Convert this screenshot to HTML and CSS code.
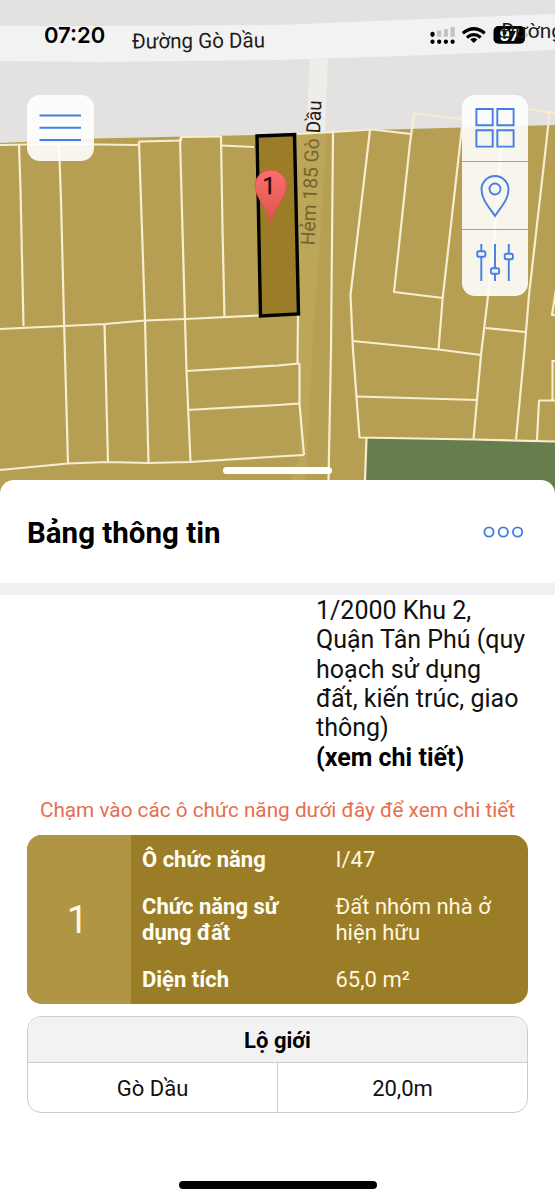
FILE: index.html
```html
<!DOCTYPE html>
<html lang="vi">
<head>
<meta charset="utf-8">
<title>Bảng thông tin</title>
<link rel="stylesheet" href="styles.css">
</head>
<body>
<main class="screen">
  <section class="map">
    <svg class="map-canvas" viewBox="0 0 555 500">
      <defs>
        <linearGradient id="pin" x1="0" y1="0" x2="0" y2="1"><stop offset="0" stop-color="#fb706f"/><stop offset="1" stop-color="#dd5048"/></linearGradient>
      </defs>
      <rect width="555" height="500" fill="#e3e2e1"/>
      <path class="road" d="M0 26 100 26 277 25 400 20 555 14V50L400 56 277 60 100 62 0 61z"/>
      <path class="alley" d="M310 59H328L325 135H306z"/>
      <path class="zone" d="M0 143 95 138.5 257 135 333 132 372 130 462 127.5 555 125V500H0z"/>
      <path class="alley-zone" d="M297 134 327 132 318 270 314 320 306 480H290L300 455 299 314z"/>
      <path class="park" d="M366 438 474 440 555 441V500H365z"/>
      <g class="parcels">
        <path d="M0 145 58 144 138.500 145 139.500 141.500 181 140.500V137L220.500 136.500M221 145.500 254 147"/>
        <path d="M19 144 20.500 190 23.500 326M59 144 61 200 64 320 68 463.500M139 142 142 230 145 320 148.500 463M180 138 182.500 230 185 320 186.500 371 190.500 462M221 136 222.500 230 224.500 317"/>
        <path d="M0 329 64 326 105 324 145 320.500 185 319 259 315.500M104.500 324 108 462M0 470 68 463.500 108 462 148 463 190 462 278 456.500 304 455"/>
        <path d="M186 371 278 365.500 299 363.500M187 410 278 405 299 403.500M298 315 297.500 363.500 299.500 364V403.500L304 455"/>
        <path d="M297 134 333 132 372 129.500 411 134M333 132 331 350 328.500 480"/>
        <path d="M370 130 350.500 295 353 350 359.500 437.500 474 439.500 555 441.500"/>
        <path d="M462 119 414 113.500 410 143 394 292 443 298M462 127 442.700 298 438.500 349.500"/>
        <path d="M462 119 466 99M528 109 555 113M504 108 495 230 488 296 481 355 473.500 439.500M549.500 113 545.500 150 529 295 524.500 350 516 439.500"/>
        <path d="M353 341 438.500 349.500 481 355M357 396.500 477 400M485.500 328 525.500 332M556 290 552 315H556M556 361H552.500V400M537 440 539 400.500H556M366.500 438 365 480"/>
      </g>
      <path class="selected" d="M257 136 294.500 134.500 298.500 314 260.500 316z"/>
      <path class="pin" d="M270.500 225C269 209 255 199 255 184.500A15.800 15.800 0 0 1 286.500 184.500C286.500 199 272 209 270.500 225z"/>
      <text class="pin-label" x="269" y="194" text-anchor="middle">1</text>
      <text class="map-label" x="132" y="48.500" textLength="133" lengthAdjust="spacingAndGlyphs" transform="rotate(-.5 132 48)">Đường Gò Dầu</text>
      <text class="map-label alley-label" transform="translate(314.500 245.500) rotate(-87.500)" textLength="107" lengthAdjust="spacingAndGlyphs">Hẻm 185 Gò</text>
      <text class="map-label end-label" transform="translate(320 133.500) rotate(-87.500)" textLength="33" lengthAdjust="spacingAndGlyphs">Dầu</text>
    </svg>

    <header class="status">
      <span class="clock">07:20</span>
      <svg class="status-icons" width="130" height="40" viewBox="0 0 130 40">
        <g stroke-width="4.300" stroke-linecap="round">
          <path stroke="#000" d="M7.500 14v.8M7.500 21.700v.1M14.200 21.700v.1M20.900 21.700v.1M27.600 21.700v.1"/>
          <path stroke="#c3c3c3" stroke-linecap="butt" d="M14.200 10.500v6.300M20.900 9v7.800M27.600 7v9.800"/>
        </g>
        <path d="M37.800 13.300Q48.800 4.200 59.800 13.300M41.900 17.400Q48.800 11.700 55.700 17.400" fill="none" stroke="#000" stroke-width="3.200"/>
        <path d="M48.800 23 45.200 19.400Q48.800 16.600 52.400 19.400z"/>
        <rect x="68.500" y="6" width="31.500" height="17.800" rx="5"/>
        <path d="M101.500 12.500q2.300 2.500 0 5z" fill="#aaa"/>
        <text class="battery" x="84.300" y="21" text-anchor="middle">97</text>
        <text class="map-label" x="76" y="18" textLength="62" lengthAdjust="spacingAndGlyphs">Đường</text>
      </svg>
    </header>

    <div class="controls">
      <button class="control menu" aria-label="Menu">
        <svg width="67" height="66" viewBox="0 0 67 66"><path d="M12.500 20.500h41.500M12.500 32.800h41.500M12.500 45h41.500"/></svg>
      </button>
      <div class="toolbar">
        <button class="control" aria-label="Grid"><svg width="66" height="66" viewBox="0 0 66 66"><path d="M14.400 14h16.300v16.300H14.400zM35.300 14h16.300v16.300H35.300zM14.400 35.300h16.300v16.300H14.400zM35.300 35.300h16.300v16.300H35.300z"/></svg></button>
        <button class="control" aria-label="Location"><svg width="66" height="67" viewBox="0 0 66 67"><path d="M33 54C28 46 19.500 38 19.500 27.500A13.500 13.500 0 0 1 46.500 27.500C46.500 38 38 46 33 54z"/><circle cx="33" cy="27" r="5.500"/></svg></button>
        <button class="control" aria-label="Filter"><svg width="66" height="66" viewBox="0 0 66 66"><path d="M19.300 14v7.500M19.300 27v24M33 14v24.500M33 44v7M46.800 14v10M46.800 29.500v21.500"/><rect x="15.200" y="21.200" width="8.200" height="5.500" rx="1.700"/><rect x="28.900" y="38.200" width="8.200" height="5.500" rx="1.700"/><rect x="42.700" y="23.700" width="8.200" height="5.500" rx="1.700"/></svg></button>
      </div>
    </div>
    <div class="handle"></div>
  </section>

  <section class="sheet">
    <header class="sheet-head">
      <h1>Bảng thông tin</h1>
      <svg width="42" height="16" viewBox="0 0 42 16" fill="none" stroke="#3f7fe8" stroke-width="1.900"><circle cx="7" cy="7" r="4.600"/><circle cx="21.300" cy="7" r="4.600"/><circle cx="35.600" cy="7" r="4.600"/></svg>
    </header>
    <div class="sheet-body">
      <p class="plan"><span>1/2000 Khu 2,<br>Quận Tân Phú (quy<br>hoạch sử dụng<br>đất, kiến trúc, giao<br>thông)</span><br><b>(xem chi tiết)</b></p>
      <p class="hint">Chạm vào các ô chức năng dưới đây để xem chi tiết</p>
      <div class="lot">
        <div class="lot-number">1</div>
        <dl class="lot-info">
          <dt>Ô chức năng</dt><dd>I/47</dd>
          <dt>Chức năng sử<br>dụng đất</dt><dd>Đất nhóm nhà ở<br>hiện hữu</dd>
          <dt>Diện tích</dt><dd>65,0 m²</dd>
        </dl>
      </div>
      <div class="road-table">
        <div class="road-title">Lộ giới</div>
        <div class="road-row"><div>Gò Dầu</div><div>20,0m</div></div>
      </div>
    </div>
    <div class="home-bar"></div>
  </section>
</main>
</body>
</html>
```
FILE: styles.css
```css
* { box-sizing: border-box; }
body { margin: 0; background: #fff; font-family: Roboto, "Liberation Sans", sans-serif; color: #111; }
.screen { width: 555px; height: 1200px; overflow: hidden; display: flex; flex-direction: column; }
.map { position: relative; height: 480px; flex: none; display: flex; flex-direction: column; }
.map-canvas { position: absolute; left: 0; top: 0; width: 555px; height: 500px; }
.road { fill: #f2f2f2; }
.alley { fill: #efedea; }
.zone { fill: #b69f53; }
.alley-zone { fill: #bba65a; }
.park { fill: #687d4d; }
.parcels path { fill: none; stroke: #f9edcf; stroke-width: 2.2; stroke-linejoin: round; }
.selected { fill: #9b7d28; stroke: #000; stroke-width: 3.4; }
.pin { fill: url(#pin); stroke: #d9534b; stroke-width: .8; }
.pin-label { font-size: 23px; fill: #2a0a0a; stroke: #2a0a0a; stroke-width: .4; }
.map-label { font-size: 21px; fill: #1c1c1c; }
.alley-label { font-size: 19.5px; fill: #79632a; }
.end-label { font-size: 19.5px; }
.status { position: relative; height: 95px; flex: none; padding: 15px 0 0 44px; display: flex; align-items: flex-start; justify-content: space-between; }
.clock { font: 600 22px/40px Inter, Roboto, sans-serif; color: #000; }
.status-icons { margin-top: 5px; }
.battery { font: 700 16px Inter, Roboto, sans-serif; fill: #fff; }
.controls { position: relative; flex: 1; padding: 0 27px; display: flex; justify-content: space-between; align-items: flex-start; }
.control { display: block; border: 0; padding: 0; margin: 0; background: rgba(255,255,255,.89); }
.control svg { display: block; fill: none; stroke: #437fe5; stroke-width: 1.9; }
.menu { border-radius: 13px; }
.toolbar { display: flex; flex-direction: column; border-radius: 13px; overflow: hidden; }
.toolbar .control + .control { border-top: 1px solid #c2a05c; }
.handle { position: relative; align-self: center; width: 109px; height: 7px; border-radius: 4px; background: #fff; margin-bottom: 6px; }
.sheet { position: relative; flex: 1; background: #fff; border-radius: 14px 14px 0 0; display: flex; flex-direction: column; }
.sheet-head { height: 115px; flex: none; border-bottom: 12px solid #f1f1f5; padding: 3px 31px 0 27px; display: flex; align-items: center; justify-content: space-between; }
.sheet-head h1 { margin: 0; font-size: 29.5px; font-weight: 700; line-height: 40px; color: #000; }
.sheet-body { padding: 1px 27px 0; }
.plan { margin: 0 0 0 289px; font-size: 25px; line-height: 29.35px; white-space: nowrap; }
.plan b { color: #000; }
.hint { margin: 23px 0 9px; display: flex; justify-content: center; font-size: 20.75px; line-height: 31px; color: #e56e50; white-space: nowrap; }
.lot { display: flex; height: 169px; border-radius: 15px; overflow: hidden; background: #9b7d28; color: #fff7df; }
.lot-number { width: 104px; background: #af9544; display: flex; align-items: center; justify-content: center; font-size: 38px; padding-right: 3px; }
.lot-info { flex: 1; margin: 0; padding: 12px 11px; display: grid; grid-template-columns: 193.5px 1fr; row-gap: 21.5px; align-content: start; font-size: 22px; line-height: 25.5px; white-space: nowrap; }
.lot-info dt { font-weight: 700; color: #fffdf5; }
.lot-info dd { margin: 0; }
.road-table { margin-top: 12px; height: 97px; border: 1.5px solid #ccc; border-radius: 14px; overflow: hidden; display: flex; flex-direction: column; font-size: 22px; text-align: center; }
.road-title { height: 46px; line-height: 47px; background: #f2f2f2; border-bottom: 1px solid #ccc; font-weight: 700; color: #000; }
.road-row { flex: 1; display: grid; grid-template-columns: 249px 1fr; line-height: 51px; }
.road-row div + div { border-left: 1px solid #ccc; }
.home-bar { width: 198px; height: 8px; border-radius: 4px; background: #000; margin: auto auto 11px; }
```
